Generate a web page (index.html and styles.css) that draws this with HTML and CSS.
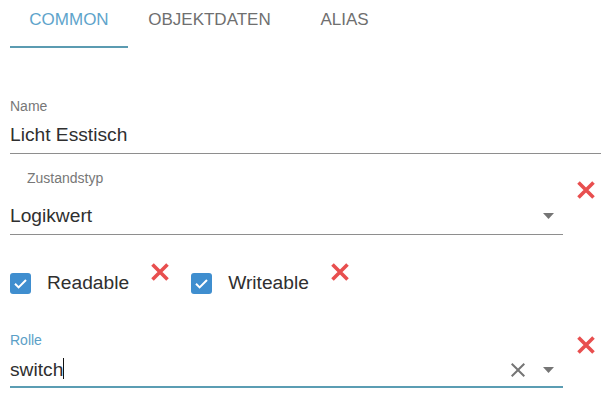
FILE: index.html
```html
<!DOCTYPE html>
<html>
<head>
<meta charset="utf-8">
<link rel="stylesheet" href="styles.css">
</head>
<body>
<div class="tabs">
  <div class="tab tab-common active">COMMON</div>
  <div class="tab tab-data">OBJEKTDATEN</div>
  <div class="tab tab-alias">ALIAS</div>
</div>
<div class="form">
  <div class="field field-name">
    <div class="label">Name</div>
    <div class="input">Licht Esstisch</div>
  </div>

  <div class="row row-type">
    <div class="field field-type">
      <div class="label label-indent">Zustandstyp</div>
      <div class="input">
        <span>Logikwert</span>
        <svg class="arrow" width="11" height="6" viewBox="0 0 11 6"><path d="M0 0h11L5.5 6z" fill="#757575"/></svg>
      </div>
    </div>
    <svg class="del del-type" width="20" height="20" viewBox="0 0 20 20"><path d="M2.5 2.5L17.5 17.5M17.5 2.5L2.5 17.5" stroke="#e84f4f" stroke-width="3.6"/></svg>
  </div>

  <div class="checks">
    <div class="check">
      <span class="box"><svg width="21" height="21" viewBox="0 0 21 21"><path d="M5 10.8l3.6 3.6L16 7" fill="none" stroke="#fff" stroke-width="2"/></svg></span>
      <span class="check-label">Readable</span>
    </div>
    <svg class="del del-small" width="20" height="20" viewBox="0 0 20 20"><path d="M2.5 2.5L17.5 17.5M17.5 2.5L2.5 17.5" stroke="#e84f4f" stroke-width="3.6"/></svg>
    <div class="check">
      <span class="box"><svg width="21" height="21" viewBox="0 0 21 21"><path d="M5 10.8l3.6 3.6L16 7" fill="none" stroke="#fff" stroke-width="2"/></svg></span>
      <span class="check-label">Writeable</span>
    </div>
    <svg class="del del-small" width="20" height="20" viewBox="0 0 20 20"><path d="M2.5 2.5L17.5 17.5M17.5 2.5L2.5 17.5" stroke="#e84f4f" stroke-width="3.6"/></svg>
  </div>

  <div class="row row-role">
    <div class="field field-role">
      <div class="label label-focus">Rolle</div>
      <div class="input input-focus">
        <span>switch<span class="caret"></span></span>
        <svg class="clear" width="14" height="14" viewBox="5 5 14 14"><path d="M19 6.41L17.59 5 12 10.59 6.41 5 5 6.41 10.59 12 5 17.59 6.41 19 12 13.41 17.59 19 19 17.59 13.41 12z" fill="#757575"/></svg>
        <svg class="arrow arrow-role" width="11" height="6" viewBox="0 0 11 6"><path d="M0 0h11L5.5 6z" fill="#757575"/></svg>
      </div>
    </div>
    <svg class="del del-role" width="20" height="20" viewBox="0 0 20 20"><path d="M2.5 2.5L17.5 17.5M17.5 2.5L2.5 17.5" stroke="#e84f4f" stroke-width="3.6"/></svg>
  </div>
</div>
</body>
</html>
```
FILE: styles.css
```css
html, body {
  margin: 0;
  padding: 0;
  background: #fff;
}
body {
  font-family: "Liberation Sans", Arial, sans-serif;
  color: #2f2f2f;
  padding-left: 10px;
}
.tabs {
  display: flex;
  height: 48px;
}
.tab {
  box-sizing: border-box;
  height: 48px;
  padding-top: 10px;
  font-size: 17px;
  line-height: 19px;
  text-align: center;
  color: #6f6f6f;
}
.tab-common { width: 118px; }
.tab-data { width: 163px; }
.tab-alias { width: 107px; }
.tab.active {
  color: #5ea4cb;
  border-bottom: 2px solid #5b9bb1;
}
.form {
  display: flex;
  flex-direction: column;
}
.field {
  display: flex;
  flex-direction: column;
}
.label {
  font-size: 14px;
  line-height: 16px;
  color: #777;
}
.label-indent { padding-left: 17px; }
.label-focus { color: #5ba0c7; }
.input {
  display: flex;
  align-items: center;
  height: 24px;
  padding-bottom: 6px;
  font-size: 19.2px;
  line-height: 24px;
  color: #2f2f2f;
  border-bottom: 1px solid #8e8e8e;
}
.field-name {
  margin-top: 50px;
}
.field-name .label { margin-bottom: 9px; }
.row {
  display: flex;
  align-items: flex-start;
}
.row-type { margin-top: 16px; }
.field-type, .field-role { width: 553px; }
.field-type .label { margin-bottom: 18px; }
.arrow {
  margin-left: auto;
  margin-right: 9px;
}
.del {
  flex: none;
}
.del-type { margin-left: 13px; margin-top: 10px; }
.checks {
  display: flex;
  align-items: flex-start;
  margin-top: 27px;
}
.check {
  display: flex;
  align-items: flex-start;
}
.box {
  display: block;
  width: 21px;
  height: 21px;
  margin-top: 11px;
  border-radius: 3px;
  background: #3f8ecf;
}
.box svg { display: block; }
.check-label {
  margin-left: 16px;
  margin-top: 10px;
  font-size: 19.2px;
  line-height: 22px;
}
.del-small { margin-left: 21px; margin-right: 21px; }
.row-role { margin-top: 38px; }
.field-role .label { margin-bottom: 10px; }
.input-focus {
  padding-bottom: 4px;
  border-bottom: 2px solid #5b9db3;
}
.caret {
  display: inline-block;
  width: 1px;
  height: 21px;
  background: #111;
  vertical-align: -3px;
}
.clear { margin-left: auto; margin-right: 18px; }
.arrow-role { margin-left: 0; }
.del-role { margin-left: 13px; margin-top: 3px; }
```
